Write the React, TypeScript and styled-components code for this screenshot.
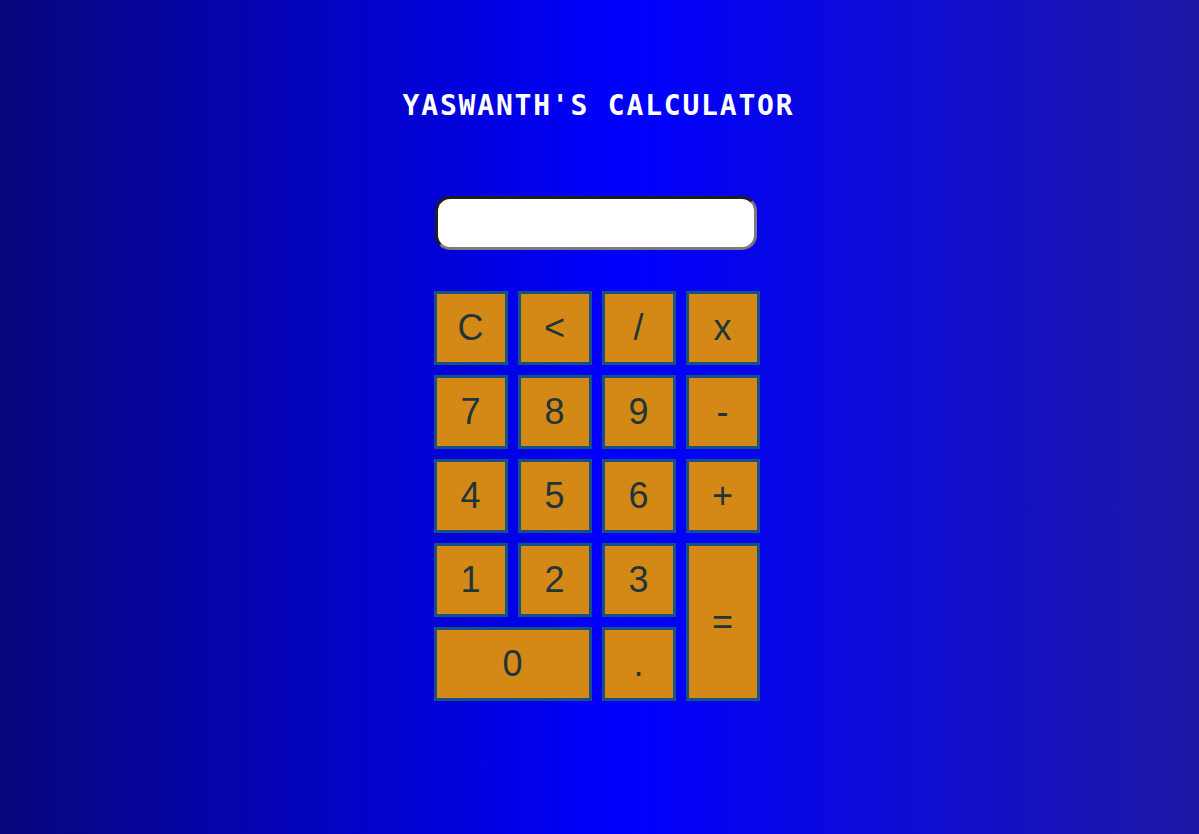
import React from "react";
import styled, { createGlobalStyle } from "styled-components";

const Global = createGlobalStyle`
  html, body { margin: 0; padding: 0; height: 100%; }
  body {
    background: linear-gradient(to right, #06067a 0%, #0000ff 52%, #1c18a4 100%);
    font-family: "Liberation Sans", Arial, sans-serif;
  }
  #root { min-height: 100%; }
`;

const Page = styled.div`
  display: flex;
  flex-direction: column;
  align-items: center;
  padding-top: 90px;
  min-height: 834px;
  box-sizing: border-box;
`;

const Title = styled.h1`
  margin: 0 0 0 -2px;
  font-family: "DejaVu Sans Mono", monospace;
  font-weight: bold;
  font-size: 28px;
  line-height: 32px;
  letter-spacing: 1.8px;
  color: #ffffff;
`;

const Display = styled.input`
  margin-top: 74px;
  margin-left: -8px;
  width: 322px;
  height: 54px;
  box-sizing: border-box;
  border-radius: 15px;
  border-width: 3px;
  border-style: solid;
  border-color: #1e1e1e #7a7a7a #7a7a7a #1e1e1e;
  background: #ffffff;
  font-size: 28px;
  padding: 0 12px;
  outline: none;
`;

const Keys = styled.div`
  margin-top: 41px;
  margin-left: -6px;
  display: grid;
  grid-template-columns: repeat(4, 74px);
  grid-auto-rows: 74px;
  gap: 10px;
`;

const Key = styled.button<{ $wide?: boolean; $tall?: boolean }>`
  box-sizing: border-box;
  border: 3px solid #165283;
  background: #d48916;
  color: #1f3537;
  font-family: "Liberation Sans", Arial, sans-serif;
  font-size: 36px;
  padding: 0;
  grid-column: ${(p) => (p.$wide ? "span 2" : "auto")};
  grid-row: ${(p) => (p.$tall ? "span 2" : "auto")};
  cursor: pointer;
`;

export default function App() {
  return (
    <>
      <Global />
      <Page>
        <Title>YASWANTH'S CALCULATOR</Title>
        <Display type="text" readOnly />
        <Keys>
          <Key>C</Key>
          <Key>&lt;</Key>
          <Key>/</Key>
          <Key>x</Key>
          <Key>7</Key>
          <Key>8</Key>
          <Key>9</Key>
          <Key>-</Key>
          <Key>4</Key>
          <Key>5</Key>
          <Key>6</Key>
          <Key>+</Key>
          <Key>1</Key>
          <Key>2</Key>
          <Key>3</Key>
          <Key $tall>=</Key>
          <Key $wide>0</Key>
          <Key>.</Key>
        </Keys>
      </Page>
    </>
  );
}
